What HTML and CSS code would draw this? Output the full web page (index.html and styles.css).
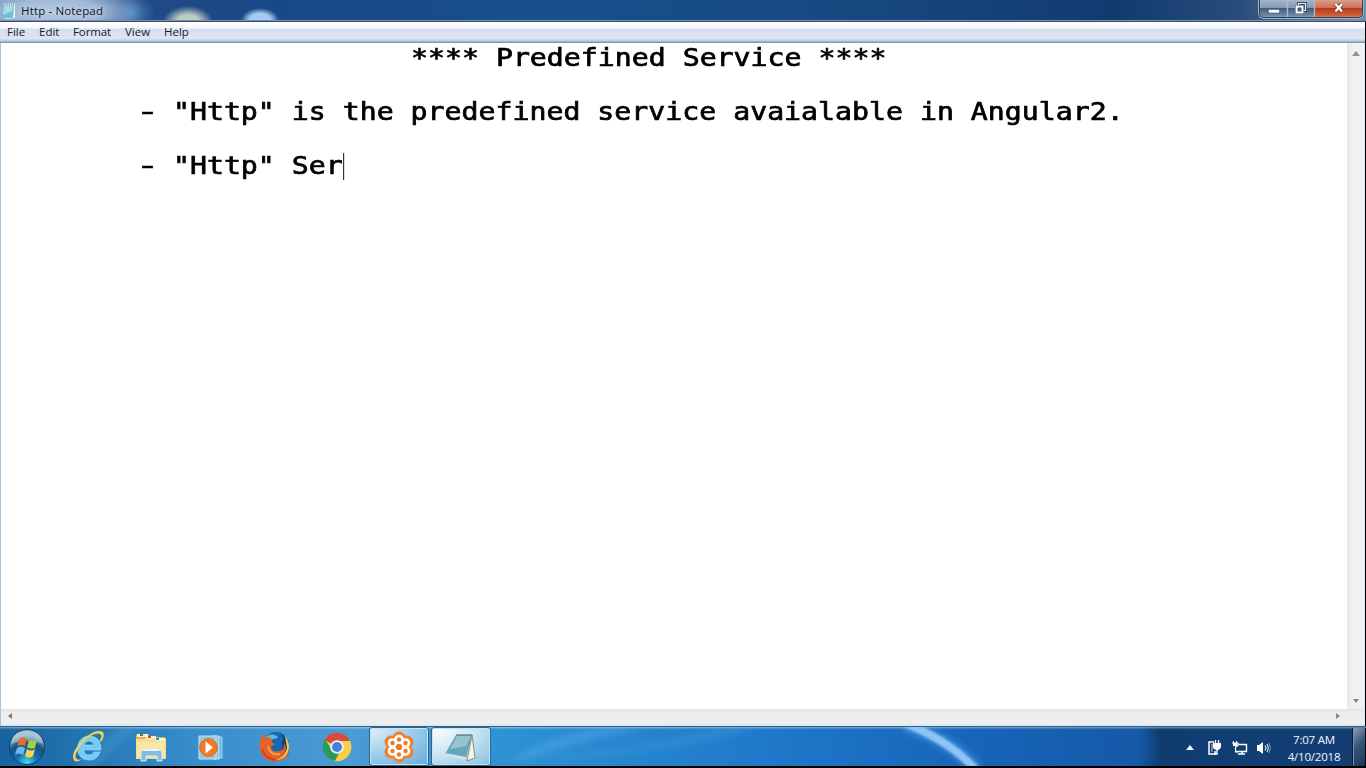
FILE: index.html
```html
<!DOCTYPE html>
<html lang="en">
<head>
<meta charset="utf-8">
<title>Http - Notepad</title>
<link rel="stylesheet" href="styles.css">
</head>
<body>
<div class="screen">
  <header class="titlebar">
    <svg class="title-icon" viewBox="0 0 16 18" width="16" height="18"><path d="M3 3 14 3 14 16 4 17Z" fill="#f0f4e9"/><path d="M2 3 13 3 12 16 1 16Z" fill="#71bdd5"/><path d="M3 4H12L11 9 2 13Z" fill="#a8dbe7"/><path d="M3 2.5H14" stroke="#dce4df" stroke-width="2" stroke-dasharray="1 1"/></svg>
    <span class="title-text">Http - Notepad</span>
    <div class="controls">
      <button class="ctl min" aria-label="Minimize"><svg width="14" height="12"><rect x="1.5" y="6.5" width="11" height="3.5" fill="#fff" stroke="#53647c" stroke-width=".7"/></svg></button>
      <button class="ctl max" aria-label="Restore"><svg width="14" height="14"><path d="M4.5 4V1.5H11.5V8.5H10" fill="none" stroke="#33475e" stroke-width="3"/><path d="M4.5 3V1.5H11.5V8.5H10" fill="none" stroke="#e9eef5" stroke-width="1.2"/><rect x="2.5" y="4.5" width="6" height="6" fill="#4b5f78" stroke="#33475e" stroke-width="3"/><rect x="2.5" y="4.5" width="6" height="6" fill="#4b5f78" stroke="#fff" stroke-width="2"/></svg></button>
      <button class="ctl close" aria-label="Close"><svg width="12" height="12"><path d="M2.5 1 9 8.5M9 1 2.5 8.5" stroke="#7b342b" stroke-width="4"/><path d="M2.5 1 9 8.5M9 1 2.5 8.5" stroke="#fff" stroke-width="2.4"/></svg></button>
    </div>
  </header>
  <nav class="menu"><span class="m-file">File</span><span class="m-edit">Edit</span><span class="m-format">Format</span><span class="m-view">View</span><span class="m-help">Help</span></nav>
  <main class="window">
    <div class="editor"><div class="text"><div class="line heading">**** Predefined Service ****</div><div class="line"><span class="dash">-</span><span>"Http" is the predefined service avaialable in Angular2.</span></div><div class="line"><span class="dash">-</span><span>"Http" Ser</span><i class="caret"></i></div></div></div>
    <div class="vscroll"><svg width="8" height="5"><path d="M0 5 4 0 8 5Z" fill="#909090"/></svg><svg width="6" height="4"><path d="M0 0H6L3 4Z" fill="#858585"/></svg></div>
    <div class="hscroll"><svg width="4" height="6"><path d="M4 0V6L0 3Z" fill="#777"/></svg><svg width="4" height="6"><path d="M0 0V6L4 3Z" fill="#888"/></svg></div>
  </main>
  <footer class="taskbar">
    <svg class="taskbar-art" viewBox="0 0 1366 40" width="1366" height="40">
      <defs><filter id="soft" x="-20%" y="-20%" width="140%" height="140%"><feGaussianBlur stdDeviation="3"/></filter><filter id="glow"><feGaussianBlur stdDeviation="1"/></filter></defs>
      <g filter="url(#soft)"><path d="M120 0H140L95 40H75Z" fill="#52a7df" opacity=".3"/><path d="M512 31Q550 7 610 0H650Q580 13 520 35Z" fill="#5bafea" opacity=".4"/><path d="M540 30Q650 22 720 0H760Q680 26 540 32Z" fill="#5bafea" opacity=".22"/></g>
      <path d="M905-2Q950 13 977 42" fill="none" stroke="#559ee6" stroke-width="13" opacity=".6" filter="url(#soft)"/><path d="M904-4Q949 13 976 43" fill="none" stroke="#8dc4f6" stroke-width="8" filter="url(#glow)"/>
    </svg>
    <div class="task start"><svg width="40" height="38" viewBox="0 0 40 38"><defs><radialGradient id="orb" cx=".5" cy=".95" r=".8"><stop stop-color="#47dff5"/><stop offset=".38" stop-color="#126fae"/><stop offset=".72" stop-color="#17527f"/><stop offset="1" stop-color="#8bb4cb"/></radialGradient></defs><circle cx="20" cy="19" r="17.5" fill="url(#orb)" stroke="#123f65"/><path d="M4 16Q5 3 20 3T36 16Q20 9 4 16Z" fill="#d7e7ed" opacity=".4"/><path d="M13 10Q17 8 20 11L18 18Q14 16 10 18Z" fill="#ed6730"/><path d="M22 12Q26 14 30 12L28 20Q24 22 20 19Z" fill="#a3cf45"/><path d="M10 20Q14 17 18 20L16 27Q12 24 8 27Z" fill="#6db9ee"/><path d="M20 21Q24 24 28 21L26 28Q22 31 18 28Z" fill="#ffd449"/></svg></div>
    <div class="task ie"><svg width="36" height="36" viewBox="0 0 36 36"><path d="M29 23Q26 32 17 31C2 30 4 7 18 7Q30 7 30 21H13Q13 26 18 26Q22 26 23 23Z M13 16H23Q22 12 18 12T13 16Z" fill="#72ccf4" fill-rule="evenodd" stroke="#a5e2fa" stroke-width=".6"/><path d="M28 13C32 7 31 3 24 5C13 9 3 24 5 29Q6 32 11 30Q3 36 2 28C2 19 17 3 27 2Q36 1 31 12Z" fill="#efd34d"/></svg></div>
    <div class="task explorer"><svg width="34" height="34" viewBox="0 0 34 34"><path d="M2 6Q2 4 4 4H14L16 7H30Q32 7 32 10V27H2Z" fill="#d6b358"/><path d="M2 9H11L13 6H21L23 9H32V29H2Z" fill="#f5dc8b"/><path d="M3 12H31V27H3Z" fill="#f9e7a5"/><path d="M3 4H14V7H3ZM13 6H22V9H13ZM21 8H31V11H21Z" fill="#f7f0d1"/><path d="M6 5H9" stroke="#318d45" stroke-width="2"/><path d="M14 7H17" stroke="#cb4433" stroke-width="2"/><path d="M22 9H25" stroke="#3a89bc" stroke-width="2"/><path d="M7 31V23Q7 20 10 20H25Q28 20 28 23V31H23V26H12V31Z" fill="#83bddd" stroke="#d8edf4"/><path d="M10 20H25" stroke="#e8f6fb" stroke-width="2"/></svg></div>
    <div class="task media"><svg width="28" height="28" viewBox="0 0 28 28"><path d="M17 4 25 4V25H17Z" fill="#69b5df" stroke="#a8d7ef"/><path d="M16 3 22 3V26H16Z" fill="#83c2e2" stroke="#c7e7f5"/><path d="M2 3H19V26H2Z" fill="#94c6dd" stroke="#c6e4ed"/><circle cx="11.5" cy="14.5" r="8.8" fill="#ef7c25" stroke="#d76822"/><path d="M8.5 8.5 16 14.5 8.5 20.5Z" fill="#fff"/></svg></div>
    <div class="task firefox"><svg width="32" height="32" viewBox="0 0 32 32"><circle cx="17" cy="14" r="13" fill="#1768ac"/><path d="M17 1Q27 4 23 12Q25 17 20 23L29 24Q32 9 22 3Z" fill="#173d77"/><path d="M10 4Q17 2 19 7L14 8 11 12Q5 12 7 6Z" fill="#62b9df"/><path d="M2 8Q3 5 4 3L7 7Q11 5 13 8L12 11 16 13 12 16Q13 22 20 20Q26 19 25 12Q29 18 24 24Q28 21 29 15Q32 27 20 30Q5 33 1 19Q0 12 2 8Z" fill="#e5612b"/><path d="M26 4Q32 13 29 21Q25 29 17 29Q26 26 28 17Z" fill="#f7c94d"/><path d="M3 18Q6 28 17 29" fill="none" stroke="#d73f22" stroke-width="2"/><path d="M9 15Q11 25 21 23" fill="none" stroke="#f4a044" stroke-width="2"/></svg></div>
    <div class="task chrome"><svg width="30" height="30" viewBox="0 0 30 30"><circle cx="15" cy="15" r="14" fill="#f6ca43"/><path d="M15 15 2.5 8A14.3 14.3 0 0 1 28 9H15Z" fill="#da493d"/><path d="M3 7 11 20 17 21 13 29A14.3 14.3 0 0 1 3 7Z" fill="#279b5b"/><path d="M28 9H15L21 18 13 29A14.2 14.2 0 0 0 28 9Z" fill="#f9d045"/><circle cx="15" cy="15" r="6.8" fill="#eef3f6"/><circle cx="15" cy="15" r="5" fill="#467edc"/></svg></div>
    <div class="task active meeting"><svg width="32" height="32" viewBox="0 0 32 32"><g fill="#ee8129"><circle cx="16" cy="7" r="6.5"/><circle cx="24" cy="11" r="6.5"/><circle cx="24" cy="21" r="6.5"/><circle cx="16" cy="25" r="6.5"/><circle cx="8" cy="21" r="6.5"/><circle cx="8" cy="11" r="6.5"/><circle cx="16" cy="16" r="11"/></g><g fill="#ed7a22" stroke="#fff" stroke-width="2.6"><circle cx="16" cy="8.5" r="3.5"/><circle cx="22.5" cy="12" r="3.5"/><circle cx="22.5" cy="20" r="3.5"/><circle cx="16" cy="23.5" r="3.5"/><circle cx="9.5" cy="20" r="3.5"/><circle cx="9.5" cy="12" r="3.5"/></g><circle cx="16" cy="16" r="3" fill="#e97b28"/></svg></div>
    <div class="task active note"><svg width="34" height="32" viewBox="0 0 34 32"><path d="M13 4 29 3 31 27 25 30Z" fill="#d2d1c4"/><path d="M28 4 31 27 23 30Z" fill="#f4f2e9" stroke="#77766e" stroke-width=".8"/><path d="M12 4 28 4 22 27 1 23Z" fill="#62a7bb"/><path d="M13 5 27 5 22 15 6 18Z" fill="#a7cad2" opacity=".8"/><path d="M1 22 22 26 21 29 2 24Z" fill="#c9e5eb"/><path d="M12 4H28" stroke="#718a93" stroke-width="1.5"/></svg></div>
    <div class="tray">
      <svg class="arrow" width="8" height="5"><path d="M0 5 4 0 8 5Z" fill="#eef5ff"/></svg>
      <svg class="power" width="14" height="17" viewBox="0 0 14 17"><path d="M7 3H2V15H8V12" fill="none" stroke="#fff" stroke-width="1.5"/><path d="M4 5H6V13H4Z" fill="#77889d"/><path d="M8.5 1V5M11.5 1V5" stroke="#fff" stroke-width="1.3"/><path d="M6 4H14V8Q13 11 11 11H9Q6 10 6 8Z" fill="#fff"/><path d="M10 10V15H7" stroke="#fff" stroke-width="1.4" fill="none"/></svg>
      <svg class="network" width="16" height="16" viewBox="0 0 16 16"><path d="M6 4.5H14.5V11.5H4" fill="none" stroke="#fff" stroke-width="1.4"/><path d="M6 14H13M10 12V14" stroke="#fff" stroke-width="1.5"/><path d="M1.5 1V4M4.5 1V4" stroke="#fff"/><path d="M0 3H6V5Q5 7 3.5 7V12H6" fill="none" stroke="#fff" stroke-width="1.2"/><path d="M1 3H5V6H1Z" fill="#fff"/></svg>
      <svg class="sound" width="16" height="14" viewBox="0 0 16 14"><path d="M1 4H3V10H1ZM3 4 7 1V13L3 10Z" fill="#fff"/><path d="M9 4.5Q11 7 9 9.5M11 3Q13.5 7 11 11" fill="none" stroke="#dce8f7" stroke-width="1.1"/><path d="M13 2Q16 7 13 12" fill="none" stroke="#92a8c3" stroke-width=".8"/></svg>
      <div class="clock"><span>7:07 AM</span><span class="date">4/10/2018</span></div>
      <div class="desktop"></div>
    </div>
  </footer>
</div>
</body>
</html>
```
FILE: styles.css
```css
* { box-sizing: border-box; }
body { margin: 0; overflow: hidden; background: #000; font-family: "Open Sans", "Noto Sans", sans-serif; }
svg { display: block; flex: none; }
.screen { width: 1366px; height: 768px; display: grid; grid-template-rows: 22px 21px 683px 42px; }
.titlebar { display: flex; align-items: center; border-bottom: 1px solid #344c68; box-shadow: inset 0 -1px #7d91ae; background: radial-gradient(ellipse 100px 30px at 55px 12px, #b5c8e2 0, #a1b8d7 45%, #7897c100 100%), radial-gradient(ellipse 25px 16px at 188px 22px, #bbcac3 0 45%, #8da99b00 100%), radial-gradient(ellipse 19px 12px at 260px 20px, #a6cbf3 0 55%, #729eca00 100%), radial-gradient(ellipse 14px 15px at 130px 14px, #2678b7 0, #2678b700 100%), linear-gradient(90deg, #5f86b6, #204c88 130px, #194886 280px, #17508c 550px, #174a82 820px, #123b70 1120px, #294d7a 1240px, #6f8daa 1366px); }
.title-icon { margin-left: 1px; }
.title-text { margin-left: 4px; font-size: 11.5px; line-height: 20px; letter-spacing: .15px; color: #10151c; text-shadow: 0 0 5px #e2edf8; white-space: nowrap; }
.controls { display: flex; align-self: flex-start; width: 104px; height: 18px; margin: 0 3px 0 auto; border: 1px solid #263f5c; border-top: 0; border-radius: 0 0 5px 5px; box-shadow: 0 0 0 1px #a1b5c9; overflow: hidden; }
.ctl { height: 17px; padding: 0; border: 0; border-right: 1px solid #a9bbcd; display: grid; place-items: center; background: linear-gradient(#a3b4c8 0, #8499b2 46%, #415c7c 50%, #7893ae 100%); box-shadow: inset 0 0 1px #d7e3ee; }
.min { width: 28px; }
.max { width: 27px; }
.close { width: 47px; border-right: 0; background: linear-gradient(#d89b88, #cd7359 44%, #b83a19 50%, #d76841 100%); }
.menu { display: flex; align-items: center; height: 21px; padding: 0 0 2px 7px; color: #171d27; font-size: 11.5px; line-height: 17px; background: linear-gradient(#fff 0, #f5f7fb 6px, #d7e0f2 7px, #dce3f5 17px, #c5ccd5 18px, #cad2da 19px, #6e9dca 20px); border-right: 1px solid #000; }
.menu span { flex: none; white-space: nowrap; }
.m-file { width: 32px; }
.m-edit { width: 34px; }
.m-format { width: 52px; letter-spacing: -.1px; }
.m-view { width: 39px; }
.window { display: grid; grid-template-columns: 1346px 17px; grid-template-rows: 666px 15px; border-left: 1px solid #a5c5df; border-right: 1px solid #000; background: #dceaf8; }
.editor { background: #fff; overflow: hidden; }
.text { width: 1140px; font: 24px/54px "DejaVu Sans Mono", monospace; letter-spacing: .03px; -webkit-text-stroke: .7px #000; color: #000; white-space: pre; transform: scaleX(1.1725); transform-origin: 0 0; margin: -12px 0 0 138px; }
.line { height: 54px; }
.heading { padding-left: 232px; }
.dash { -webkit-text-stroke: .4px #000; display: inline-block; margin-right: 14.48px; transform: scaleX(1.45); }
.caret { display: inline-block; width: 1px; height: 27px; vertical-align: -6px; background: #333; }
.vscroll { display: flex; flex-direction: column; justify-content: space-between; align-items: center; padding: 8px 0 6px; background: linear-gradient(90deg, #e6e6e6, #f1f1f1 5px); }
.hscroll { grid-column: 1 / 3; display: flex; align-items: center; justify-content: space-between; padding: 0 24px 1px 7px; background: linear-gradient(#e3e3e3, #eee 4px); }
.taskbar { position: relative; display: flex; align-items: center; height: 42px; padding-bottom: 0; border-top: 1px solid #345d80; border-bottom: 2px solid #000; background: linear-gradient(#ffffff70, #ffffff10 2px, transparent 3px), linear-gradient(90deg, #1962a0, #2274b0 80px, #368dcb 190px, #4b9bd4 350px, #2e92d3 500px, #207acb 750px, #1766ba 960px, #1658a8 1140px, #103d70 1160px, #123e75 1340px, #1c3d62 1366px); overflow: hidden; }
.taskbar-art { position: absolute; left: 0; top: 0; }
.task { position: relative; display: grid; place-items: center; height: 39px; width: 62px; flex: none; }
.start { width: 56px; padding-right: 2px; }
.ie { width: 65px; padding-left: 1px; }
.explorer { width: 60px; }
.media { width: 60px; }
.firefox { width: 66px; padding-left: 1px; }
.chrome { width: 61px; padding-right: 2px; }
.active { width: 60px; margin-left: 1px; margin-right: 2px; border: 1px solid #316486; border-radius: 3px; box-shadow: inset 0 0 0 1px #c4e5f8; background: radial-gradient(ellipse at 0 0, #e0f1fa, #9bcbe9 55%, #61addb); }
.note { margin-left: 0; background: radial-gradient(ellipse at 0 0, #fff, #c7e4f1 55%, #85bfdf); }
.tray { position: relative; display: flex; align-items: center; margin-left: auto; height: 39px; padding-top: 2px; }
.arrow { margin-right: 13px; }
.power { margin-right: 11px; }
.network { margin-right: 8px; }
.clock { display: flex; flex-direction: column; align-items: center; width: 70px; margin-left: 7px; margin-right: 3px; color: #f3f7ff; font-size: 11.5px; line-height: 17px; letter-spacing: -.2px; }
.desktop { width: 14px; height: 39px; border-left: 1px solid #0a1f3a; box-shadow: inset 1px 0 #6f8fae; background: linear-gradient(135deg, #8ba2b9, #345579 45%, #173656); border-right: 1px solid #000; }
```
